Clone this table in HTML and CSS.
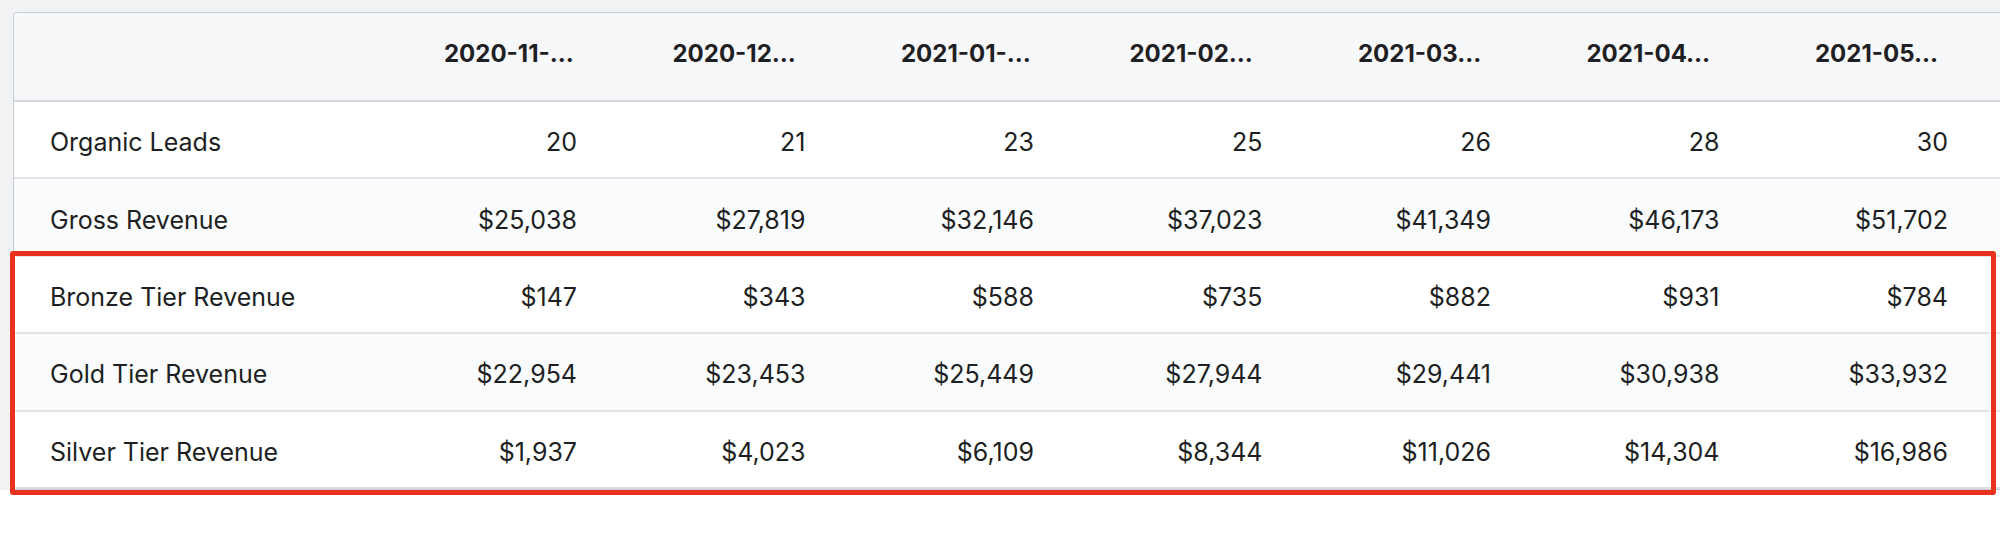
FILE: index.html
```html
<!DOCTYPE html>
<html>
<head>
<meta charset="utf-8">
<link rel="stylesheet" href="styles.css">
</head>
<body>
<div class="frame">
  <div class="card">
    <table class="grid">
      <colgroup>
        <col class="c-label">
        <col class="c-num"><col class="c-num"><col class="c-num"><col class="c-num"><col class="c-num"><col class="c-num"><col class="c-num">
        <col class="c-fill">
      </colgroup>
      <thead>
        <tr>
          <th class="lbl"></th>
          <th><span class="hd">2020-11-…</span></th>
          <th><span class="hd">2020-12…</span></th>
          <th><span class="hd">2021-01-…</span></th>
          <th><span class="hd">2021-02…</span></th>
          <th><span class="hd">2021-03…</span></th>
          <th><span class="hd">2021-04…</span></th>
          <th><span class="hd">2021-05…</span></th>
          <th></th>
        </tr>
      </thead>
      <tbody>
        <tr>
          <td class="lbl">Organic Leads</td>
          <td>20</td><td>21</td><td>23</td><td>25</td><td>26</td><td>28</td><td>30</td><td></td>
        </tr>
        <tr>
          <td class="lbl">Gross Revenue</td>
          <td>$25,038</td><td>$27,819</td><td>$32,146</td><td>$37,023</td><td>$41,349</td><td>$46,173</td><td>$51,702</td><td></td>
        </tr>
        <tr>
          <td class="lbl">Bronze Tier Revenue</td>
          <td>$147</td><td>$343</td><td>$588</td><td>$735</td><td>$882</td><td>$931</td><td>$784</td><td></td>
        </tr>
        <tr>
          <td class="lbl">Gold Tier Revenue</td>
          <td>$22,954</td><td>$23,453</td><td>$25,449</td><td>$27,944</td><td>$29,441</td><td>$30,938</td><td>$33,932</td><td></td>
        </tr>
        <tr>
          <td class="lbl">Silver Tier Revenue</td>
          <td>$1,937</td><td>$4,023</td><td>$6,109</td><td>$8,344</td><td>$11,026</td><td>$14,304</td><td>$16,986</td><td></td>
        </tr>
      </tbody>
    </table>
  </div>
  <div class="highlight"></div>
</div>
</body>
</html>
```

FILE: styles.css
```css
html {
  overflow: hidden;
}

html, body {
  margin: 0;
  padding: 0;
  background: #ffffff;
}

body {
  min-height: 534px;
  font-family: Inter, "Liberation Sans", sans-serif;
  color: #1d1f22;
}

.frame {
  position: relative;
  background: #f1f2f4;
  padding: 12px 0 0 13px;
}

.card {
  border: 1px solid #c9ccd1;
  border-right: none;
  border-radius: 4px 0 0 4px;
  background: #ffffff;
  overflow: hidden;
}

.grid {
  width: 100%;
  border-collapse: collapse;
  table-layout: fixed;
  font-size: 25px;
}

.c-label { width: 358.5px; }
.c-num { width: 228.5px; }

.grid th {
  height: 88px;
  padding: 0 24px 0 0;
  box-sizing: border-box;
  background: #f7f8f9;
  border-bottom: 2px solid #d4d7dc;
  text-align: right;
  font-size: 24px;
  font-weight: 700;
  white-space: nowrap;
  vertical-align: middle;
  color: #1f2023;
}

.hd {
  display: inline-block;
  width: 133px;
  text-align: left;
  overflow: hidden;
}

.grid td {
  height: 77.4px;
  padding: 5px 24px 0 0;
  box-sizing: border-box;
  text-align: right;
  white-space: nowrap;
  border-bottom: 2px solid #e3e5e9;
  vertical-align: middle;
}

.grid tbody tr:nth-child(odd) td { background: #ffffff; }
.grid tbody tr:nth-child(even) td { background: #fafbfc; }
.grid tbody tr:last-child td { border-bottom-color: #dcdce9; }

.grid .lbl {
  text-align: left;
  padding-left: 36px;
}

.highlight {
  position: absolute;
  left: 10px;
  top: 251px;
  width: 1986px;
  height: 244px;
  box-sizing: border-box;
  border: 5px solid #e8321e;
  border-radius: 3px;
}
```
